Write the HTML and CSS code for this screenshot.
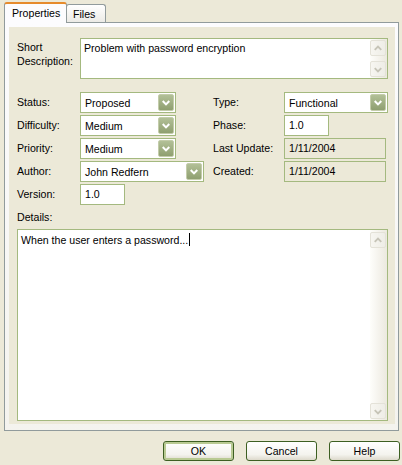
FILE: index.html
```html
<!DOCTYPE html>
<html>
<head>
<meta charset="utf-8">
<link rel="stylesheet" href="styles.css">
</head>
<body>
<div class="dialog">
  <div class="tabs">
    <div class="tab active">Properties</div>
    <div class="tab">Files</div>
  </div>
  <div class="panel">
    <div class="sheet">
      <div class="desc-row">
        <div class="label two">Short<br>Description:</div>
        <div class="edit memo short">
          <div class="memo-text">Problem with password encryption</div>
          <div class="vscroll">
            <div class="sbtn"><svg width="15" height="15" viewBox="0 0 15 15"><polyline points="4,9 7.5,5.5 11,9" fill="none" stroke="#c6c4b7" stroke-width="2"/></svg></div>
            <div class="strack"></div>
            <div class="sbtn"><svg width="15" height="15" viewBox="0 0 15 15"><polyline points="4,6 7.5,9.5 11,6" fill="none" stroke="#c6c4b7" stroke-width="2"/></svg></div>
          </div>
        </div>
      </div>

      <div class="grid">
        <div class="label">Status:</div>
        <div class="cell"><div class="combo w95"><span>Proposed</span><span class="drop"><svg width="15" height="17" viewBox="0 0 15 17"><polyline points="4,7 7.5,10.5 11,7" fill="none" stroke="#fff" stroke-width="2.2"/></svg></span></div></div>
        <div class="label">Type:</div>
        <div class="cell"><div class="combo w104"><span>Functional</span><span class="drop"><svg width="15" height="17" viewBox="0 0 15 17"><polyline points="4,7 7.5,10.5 11,7" fill="none" stroke="#fff" stroke-width="2.2"/></svg></span></div></div>

        <div class="label">Difficulty:</div>
        <div class="cell"><div class="combo w95"><span>Medium</span><span class="drop"><svg width="15" height="17" viewBox="0 0 15 17"><polyline points="4,7 7.5,10.5 11,7" fill="none" stroke="#fff" stroke-width="2.2"/></svg></span></div></div>
        <div class="label">Phase:</div>
        <div class="cell"><div class="edit field w45">1.0</div></div>

        <div class="label">Priority:</div>
        <div class="cell"><div class="combo w95"><span>Medium</span><span class="drop"><svg width="15" height="17" viewBox="0 0 15 17"><polyline points="4,7 7.5,10.5 11,7" fill="none" stroke="#fff" stroke-width="2.2"/></svg></span></div></div>
        <div class="label">Last Update:</div>
        <div class="cell"><div class="edit field disabled w102">1/11/2004</div></div>

        <div class="label">Author:</div>
        <div class="cell"><div class="combo w123"><span>John Redfern</span><span class="drop"><svg width="15" height="17" viewBox="0 0 15 17"><polyline points="4,7 7.5,10.5 11,7" fill="none" stroke="#fff" stroke-width="2.2"/></svg></span></div></div>
        <div class="label">Created:</div>
        <div class="cell"><div class="edit field disabled w102">1/11/2004</div></div>

        <div class="label">Version:</div>
        <div class="cell"><div class="edit field w45">1.0</div></div>
      </div>

      <div class="label details-label">Details:</div>
      <div class="edit memo details">
        <div class="memo-text">When the user enters a password...<span class="caret"></span></div>
        <div class="vscroll">
          <div class="sbtn"><svg width="15" height="15" viewBox="0 0 15 15"><polyline points="4,9 7.5,5.5 11,9" fill="none" stroke="#c6c4b7" stroke-width="2"/></svg></div>
          <div class="strack"></div>
          <div class="sbtn"><svg width="15" height="15" viewBox="0 0 15 15"><polyline points="4,6 7.5,9.5 11,6" fill="none" stroke="#c6c4b7" stroke-width="2"/></svg></div>
        </div>
      </div>
    </div>
  </div>
  <div class="buttons">
    <div class="btn default">OK</div>
    <div class="btn">Cancel</div>
    <div class="btn">Help</div>
  </div>
</div>
</body>
</html>
```

FILE: styles.css
```css
html, body {
  margin: 0;
  padding: 0;
}
body {
  width: 402px;
  height: 465px;
  overflow: hidden;
  background: #ECE9D8;
  font-family: "Liberation Sans", Arial, sans-serif;
  font-size: 10.6px;
  color: #000;
}
.dialog {
  padding: 2px 3px 0 4px;
}
.tabs {
  display: flex;
  align-items: flex-end;
  height: 21px;
  margin-bottom: -1px;
  position: relative;
  z-index: 1;
}
.tab {
  box-sizing: border-box;
  height: 18px;
  width: 40px;
  margin-left: -1px;
  margin-bottom: 1px;
  border: 1px solid #919B9C;
  border-bottom: none;
  border-radius: 3px 3px 0 0;
  background: linear-gradient(#FFFFFF, #ECEBE6);
  padding: 3px 0 0 6px;
  line-height: 13px;
}
.tab.active {
  width: 63px;
  height: 21px;
  margin-left: 0;
  margin-bottom: 0;
  background: #FCFCFE;
  border-top: 2px solid #E68B2C;
  padding: 3px 0 0 7px;
}
.panel {
  box-sizing: border-box;
  height: 409px;
  border: 1px solid #919B9C;
  background: linear-gradient(#FCFCFE, #F4F3EE);
  padding: 4px 3px 6px 4px;
  display: flex;
}
.sheet {
  flex: 1;
  background: #ECE9D8;
  padding: 11px 7px 3px 8px;
  display: flex;
  flex-direction: column;
}
.label {
  line-height: 13px;
  white-space: nowrap;
}
.desc-row {
  display: flex;
}
.desc-row .label {
  width: 63px;
  padding-top: 2px;
  line-height: 14px;
}
.edit {
  box-sizing: border-box;
  border: 1px solid #A4B97F;
  background: #fff;
}
.memo {
  display: flex;
}
.memo-text {
  flex: 1;
  padding: 3px 3px;
  line-height: 13px;
}
.short {
  width: 308px;
  height: 41px;
}
.vscroll {
  width: 17px;
  display: flex;
  flex-direction: column;
  background: linear-gradient(90deg, #FEFEFB, #F3F1EA 60%, #EBE9DE);
  padding: 1px 1px 1px 0;
  box-sizing: border-box;
}
.sbtn {
  box-sizing: border-box;
  height: 16px;
  border: 1px solid #E4E2D8;
  border-radius: 2px;
  background: linear-gradient(90deg, #F7F6F1, #EEEDE6);
  display: flex;
  align-items: center;
  justify-content: center;
}
.sbtn svg {
  display: block;
}
.strack {
  flex: 1;
}
.grid {
  margin-top: 13px;
  display: grid;
  grid-template-columns: 63px 133px 71px 1fr;
  grid-auto-rows: 21px;
  row-gap: 2px;
}
.grid .label {
  align-self: center;
}
.cell {
  display: flex;
}
.combo {
  box-sizing: border-box;
  height: 21px;
  border: 1px solid #A4B97F;
  background: #fff;
  display: flex;
  align-items: center;
  justify-content: space-between;
  padding: 1px 1px 1px 4px;
}
.drop {
  box-sizing: border-box;
  width: 16px;
  height: 17px;
  border: 1px solid #C3CCAA;
  border-radius: 2px;
  background: linear-gradient(#B2C097, #8F9F70);
  display: flex;
  align-items: center;
  justify-content: center;
}
.drop svg {
  display: block;
}
.field {
  height: 21px;
  padding: 0 4px;
  line-height: 19px;
}
.disabled {
  background: #ECE9D8;
}
.w95 { width: 96px; }
.w104 { width: 104px; }
.w123 { width: 124px; }
.w45 { width: 45px; }
.w102 { width: 102px; }
.details-label {
  margin-top: 6px;
}
.details {
  margin-top: 5px;
  width: 371px;
  height: 192px;
}
.details .vscroll {
  padding-top: 2px;
}
.caret {
  display: inline-block;
  width: 1px;
  height: 13px;
  background: #000;
  vertical-align: -2px;
  margin-left: 1px;
}
.buttons {
  display: flex;
  justify-content: flex-end;
  gap: 12px;
  margin-top: 10px;
  margin-right: -1px;
}
.btn {
  box-sizing: border-box;
  width: 71px;
  height: 20px;
  border: 1px solid #3D5F22;
  border-radius: 3px;
  background: linear-gradient(#FFFFFF, #F4F3EE 70%, #DDD9CC);
  text-align: center;
  line-height: 18px;
}
.btn.default {
  box-shadow: inset 0 0 0 2px #B9CA93;
}
```
